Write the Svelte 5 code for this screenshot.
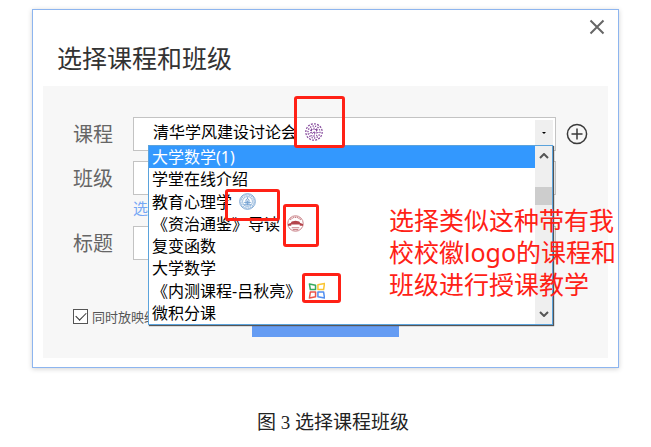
<script lang="ts">
  type Badge = "seal" | "tower" | "gate" | "tiles";
  type Course = { name: string; badge?: Badge };

  const courses: Course[] = [
    { name: "大学数学(1)" },
    { name: "学堂在线介绍" },
    { name: "教育心理学", badge: "tower" },
    { name: "《资治通鉴》导读", badge: "gate" },
    { name: "复变函数" },
    { name: "大学数学" },
    { name: "《内测课程-吕秋亮》", badge: "tiles" },
    { name: "微积分课" },
  ];

  let active = $state(0);
  let showing = $state(true);
</script>

{#snippet icon(badge: Badge)}
  <svg class="badge" viewBox="0 0 18 18" aria-hidden="true">
    {#if badge === "seal"}
      <g fill="none" stroke="#84479b">
        <circle cx="9" cy="9" r="8.2" stroke-width="1.2" stroke-dasharray="2 1.2" />
        <circle cx="9" cy="9" r="6" stroke-width="1.3" stroke-dasharray="1.3 1.3" />
        <path
          d="M5 7.500l2.500-1M10 6.500l3 .5M6.500 5.500v2.500M9 4.500v2.500M11.500 5.500v3M4.500 10.500l2-1.500 1 2M8 9.500l2-.5-.5 2.500M11 10l2.500-.5M9 12v2M5.500 12.500l2 .5M11 12l1.500 1"
        />
      </g>
    {:else if badge === "tower"}
      <g fill="none" stroke="#76a3d2">
        <circle cx="9" cy="9" r="8.3" stroke-width="1" />
        <circle cx="9" cy="9" r="6.9" stroke-width="1.6" stroke-dasharray="1.4 .7" opacity=".7" />
        <circle cx="9" cy="9" r="5.2" stroke-width=".8" />
        <path d="M9 4.500v2M7 7.500l2-1.500 2 1.500M7.500 7.500v5M10.500 7.500v5M9 8v5M5.500 10h7M5 12.500h8" />
      </g>
    {:else if badge === "gate"}
      <circle cx="9" cy="9" r="8.2" fill="none" stroke="#c98086" stroke-width="1" />
      <path
        d="M3.500 5a7 7 0 0 1 11 0"
        fill="none"
        stroke="#c98086"
        stroke-width="1.6"
        stroke-dasharray="1.2 .7"
      />
      <path d="M1 9.500l3-1 1-1.500 4-1 4 1 1 1.500 3 1v2h-3.500v-1.500h-9v1.500h-3.500z" fill="#b4454c" />
      <path d="M5 13.500h8M6 15.500h6" stroke="#c98086" stroke-width="1.2" />
    {:else}
      <g fill="none" stroke-width="1.6" stroke-linejoin="round">
        <path d="M1.500 2l6.500 1.500v4.500h-5.500z" stroke="#36a95f" />
        <path d="M10.500 3l7-1.500-1 6.500h-6z" stroke="#fac532" />
        <path d="M2.500 10.500h5.500v5l-6.500 1.500z" stroke="#ea5549" />
        <path d="M10.500 10.500h6l1 6.500-7-1.500z" stroke="#528ff0" />
      </g>
    {/if}
  </svg>
{/snippet}

<figure>
  <section class="dialog">
    <header>
      <h1>选择课程和班级</h1>
      <button class="close" aria-label="关闭">
        <svg viewBox="0 0 16 16"><path d="M1.500 1.500l13 13M14.500 1.500l-13 13" /></svg>
      </button>
    </header>

    <form onsubmit={(e) => e.preventDefault()}>
      <div class="row">
        <label for="course">课程</label>
        <div class="combo">
          <select id="course">
            <option>清华学风建设讨论会</option>
          </select>
          <span class="picked">{@render icon("seal")}</span>
          <span class="arrow"></span>
          <div class="menu">
            <ul role="listbox" aria-label="课程">
              {#each courses as course, i}
                <li role="option" aria-selected={i === active}>
                  <button type="button" class:active={i === active} onclick={() => (active = i)}>
                    {course.name}
                    {#if course.badge}{@render icon(course.badge)}{/if}
                  </button>
                </li>
              {/each}
            </ul>
            <div class="scrollbar">
              <svg viewBox="0 0 10 6"><path d="M1 5l4-4 4 4" /></svg>
              <span class="thumb"></span>
              <svg viewBox="0 0 10 6"><path d="M1 1l4 4 4-4" /></svg>
            </div>
          </div>
        </div>
        <button type="button" class="add" aria-label="添加课程">
          <svg viewBox="0 0 22 22">
            <circle cx="11" cy="11" r="9.6" />
            <path d="M11 5.500v11M5.500 11h11" />
          </svg>
        </button>
      </div>

      <div class="row">
        <label for="group">班级</label>
        <select id="group"></select>
      </div>
      <a href="#group" class="hint">选择班级</a>

      <div class="row">
        <label for="title">标题</label>
        <input id="title" type="text" />
      </div>

      <div class="actions">
        <label class="check">
          <input type="checkbox" bind:checked={showing} />
          <span>同时放映给学生</span>
        </label>
        <button class="start">开启雨课堂</button>
      </div>
    </form>

    <!-- notes drawn over the dialog -->
    <span class="mark mark-seal"></span>
    <span class="mark mark-tower"></span>
    <span class="mark mark-gate"></span>
    <span class="mark mark-tiles"></span>
    <p class="note">选择类似这种带有我<br />校校徽logo的课程和<br />班级进行授课教学</p>
  </section>

  <figcaption>图 3 选择课程班级</figcaption>
</figure>

<style>
  :global(body) {
    background: #fff;
  }

  figure {
    margin: 0;
    padding: 9px 32px 8px;
    font-family: "Noto Sans", "Noto Sans CJK SC", sans-serif;
  }

  figure * {
    box-sizing: border-box;
  }

  button,
  input,
  select {
    font: inherit;
  }

  button {
    padding: 0;
    border: 0;
    background: none;
  }

  .dialog {
    position: relative;
    border: 1px solid #8db5ef;
    padding: 0 10px 9px;
    background: #fff;
    box-shadow: 0 1px 5px rgba(0, 0, 0, 0.18);
  }

  header {
    display: flex;
    justify-content: space-between;
    height: 76px;
    padding-left: 14px;
  }

  h1 {
    margin: 30px 0 0;
    font-size: 25px;
    line-height: 36px;
    font-weight: 400;
    color: #333;
  }

  .close {
    width: 16px;
    height: 16px;
    margin: 9px 3px 0 0;
  }

  .close svg {
    display: block;
    fill: none;
    stroke: #666;
    stroke-width: 2;
  }

  form {
    padding: 31px 30px 21px;
    background: #f7f7f7;
  }

  .row {
    display: grid;
    grid-template-columns: 60px 1fr 22px;
    align-items: center;
    margin-bottom: 10px;
  }

  .row > label {
    padding-top: 2px;
    font-size: 20px;
    line-height: 32px;
    color: #666;
  }

  .row select,
  .row input {
    display: block;
    width: 100%;
    height: 34px;
    border: 1px solid #c3c3c3;
    border-radius: 0;
    appearance: none;
    background: #fff;
  }

  .combo {
    position: relative;
  }

  .row .combo select {
    padding: 0 40px 4px 19px;
    font-size: 16px;
    color: #000;
  }

  .picked {
    position: absolute;
    top: 6px;
    left: 172px;
  }

  .badge {
    flex: none;
    display: block;
    width: 18px;
    height: 18px;
  }

  .arrow {
    position: absolute;
    top: 3px;
    right: 3px;
    display: grid;
    place-items: center;
    width: 18px;
    height: 26px;
    background: #efefef;
    pointer-events: none;
  }

  .arrow::after {
    content: "";
    border: 2px solid transparent;
    border-top-color: #000;
    border-bottom: 0;
  }

  .menu {
    position: absolute;
    z-index: 1;
    top: 28px;
    left: 15px;
    right: 3px;
    display: flex;
    height: 180px;
    border: 1px solid #5ba3dc;
    background: #fff;
    box-shadow: 1px 1px 1px #555;
  }

  ul {
    flex: 1;
    display: grid;
    grid-auto-rows: 1fr;
    margin: 0;
    padding: 0;
    list-style: none;
  }

  li {
    display: grid;
    min-height: 0;
  }

  li button {
    display: flex;
    align-items: center;
    gap: 7px;
    min-height: 0;
    padding: 0 3px;
    font-size: 16px;
    line-height: 22px;
    text-align: left;
    color: #000;
  }

  li button.active {
    background: #3398fe;
    color: #fff;
  }

  li .badge {
    width: 17px;
    height: 17px;
  }

  .scrollbar {
    display: flex;
    flex-direction: column;
    align-items: center;
    width: 17px;
    padding: 7px 0;
    background: #efefef;
  }

  .scrollbar svg {
    width: 10px;
    height: 6px;
    fill: none;
    stroke: #555;
    stroke-width: 2;
  }

  .thumb {
    width: 17px;
    height: 18px;
    margin: 28px 0 auto;
    background: #cdcdcd;
  }

  .add {
    width: 22px;
    height: 22px;
    margin-left: 10px;
  }

  .add svg {
    display: block;
    width: 22px;
    height: 22px;
    fill: none;
    stroke: #3a3a3a;
    stroke-width: 1.5;
  }

  .hint {
    display: block;
    margin: -7px 0 7px 60px;
    font-size: 15px;
    line-height: 21px;
    color: #75a7f5;
    text-decoration: none;
  }

  .actions {
    display: grid;
    grid-template-columns: 1fr 147px 1fr;
    margin-top: 42px;
  }

  .check {
    display: flex;
    align-items: center;
    gap: 4px;
    height: 28px;
    font-size: 13px;
    white-space: nowrap;
    color: #555;
  }

  .check input {
    display: grid;
    place-items: center;
    width: 15px;
    height: 15px;
    margin: 0;
    border: 1px solid #555;
    appearance: none;
    background: #fff;
  }

  .check input:checked::after {
    content: "";
    width: 9px;
    height: 5px;
    margin-bottom: 3px;
    border: solid #333;
    border-width: 0 0 1px 1px;
    transform: rotate(-45deg);
  }

  .start {
    height: 35px;
    padding-bottom: 12px;
    background: #659cf3;
    font-size: 16px;
    line-height: 22px;
    color: #fff;
  }

  .mark {
    position: absolute;
    z-index: 2;
    border: 3px solid #ff2116;
    border-radius: 3px;
    pointer-events: none;
  }

  .mark-seal {
    top: 86px;
    left: 261px;
    width: 51px;
    height: 52px;
  }

  .mark-tower {
    top: 179px;
    left: 192px;
    width: 55px;
    height: 32px;
  }

  .mark-gate {
    top: 194px;
    left: 250px;
    width: 36px;
    height: 43px;
  }

  .mark-tiles {
    top: 263px;
    left: 269px;
    width: 39px;
    height: 30px;
  }

  .note {
    position: absolute;
    z-index: 2;
    top: 194px;
    left: 356px;
    margin: 0;
    font-size: 25px;
    line-height: 32px;
    white-space: nowrap;
    color: #ff2116;
  }

  figcaption {
    margin-top: 41px;
    padding-left: 15px;
    font-family: "Liberation Serif", "Noto Sans CJK SC", serif;
    font-size: 19px;
    line-height: 28px;
    text-align: center;
    color: #222;
  }
</style>
